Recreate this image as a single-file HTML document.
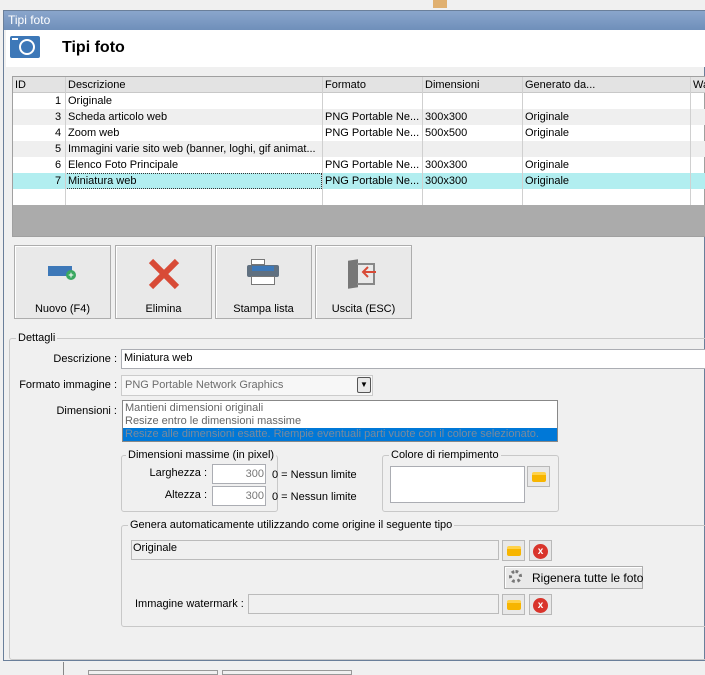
<!DOCTYPE html><html><head><style>
*{box-sizing:border-box}
body{margin:0;width:705px;height:675px;overflow:hidden;background:#f0f0f0;font-family:"Liberation Sans",sans-serif;font-size:11px;color:#000;position:relative}
.a{position:absolute}
.t{position:absolute;white-space:nowrap;line-height:13px}
.in{position:absolute;background:#fff;border:1px solid #abadb3}
.grp{position:absolute;border:1px solid #c8c8c8;border-radius:3px}
.gl{position:absolute;background:#f0f0f0;padding:0 2px;line-height:13px;top:-7px;left:6px;white-space:nowrap}
.btn{position:absolute;border:1px solid #adadad;background:#e9e9e9;box-shadow:inset 1px 1px #fff}
.cell{position:absolute;white-space:nowrap;line-height:16px;overflow:hidden}
.fold{position:absolute;border:1px solid #b8b8b8;background:#e8e8e8}
.fold i{position:absolute;left:4px;top:5px;width:14px;height:10px;background:#f7b500;border-radius:2px;border-top:3px solid #ffd24a}
.xb{position:absolute;border:1px solid #b8b8b8;background:#e8e8e8}
.xb i{position:absolute;left:3px;top:3px;width:15px;height:15px;border-radius:50%;background:#d9342b;color:#fff;font-style:normal;font-size:10px;font-weight:bold;text-align:center;line-height:15px}
</style></head><body>
<div class="a" style="left:433px;top:0;width:14px;height:8px;background:#e0b070"></div>
<div class="a" style="left:3px;top:10px;width:702px;height:651px;border:1px solid #6a7f9a;background:#f0f0f0"></div>
<div class="a" style="left:4px;top:11px;width:701px;height:19px;background:linear-gradient(#8aa6cc,#6f8fba)"></div>
<div class="t" style="left:8px;top:14px;color:#fff;font-size:12px">Tipi foto</div>
<div class="a" style="left:6px;top:30px;width:699px;height:37px;background:#fff"></div>
<div class="a" style="left:10px;top:36px;width:30px;height:22px;background:#3d78b8;border-radius:2px"></div>
<div class="a" style="left:19px;top:39px;width:16px;height:16px;border:2px solid #fff;border-radius:50%"></div>
<div class="a" style="left:12px;top:38px;width:6px;height:2px;background:#fff"></div>
<div class="t" style="left:62px;top:39px;font-size:16px;font-weight:bold;line-height:18px">Tipi foto</div>
<!-- grid -->
<div class="a" style="left:12px;top:76px;width:693px;height:161px;background:#fff;border:1px solid #a0a0a0"></div>
<div class="a" style="left:13px;top:77px;width:692px;height:16px;background:#e3e3e3;border-bottom:1px solid #c8c8c8"></div>
<div class="a" style="left:13px;top:109px;width:692px;height:16px;background:#efefef"></div>
<div class="a" style="left:13px;top:141px;width:692px;height:16px;background:#efefef"></div>
<div class="a" style="left:13px;top:173px;width:692px;height:16px;background:#b2eef0"></div>
<div class="a" style="left:65px;top:173px;width:257px;height:16px;border:1px dotted #333"></div>
<div class="a" style="left:13px;top:205px;width:692px;height:31px;background:#ababab"></div>
<div class="a" style="left:65px;top:77px;width:1px;height:128px;background:#d0d0d0"></div>
<div class="a" style="left:322px;top:77px;width:1px;height:128px;background:#d0d0d0"></div>
<div class="a" style="left:422px;top:77px;width:1px;height:128px;background:#d0d0d0"></div>
<div class="a" style="left:522px;top:77px;width:1px;height:128px;background:#d0d0d0"></div>
<div class="a" style="left:690px;top:77px;width:1px;height:128px;background:#d0d0d0"></div>
<div class="cell" style="left:15px;top:77px">ID</div><div class="cell" style="left:68px;top:77px">Descrizione</div><div class="cell" style="left:325px;top:77px">Formato</div><div class="cell" style="left:425px;top:77px">Dimensioni</div><div class="cell" style="left:525px;top:77px">Generato da...</div><div class="cell" style="left:693px;top:77px">Wa</div>
<div class="cell" style="left:55px;top:93px">1</div><div class="cell" style="left:68px;top:93px">Originale</div>
<div class="cell" style="left:55px;top:109px">3</div><div class="cell" style="left:68px;top:109px">Scheda articolo web</div><div class="cell" style="left:325px;top:109px">PNG Portable Ne...</div><div class="cell" style="left:425px;top:109px">300x300</div><div class="cell" style="left:525px;top:109px">Originale</div>
<div class="cell" style="left:55px;top:125px">4</div><div class="cell" style="left:68px;top:125px">Zoom web</div><div class="cell" style="left:325px;top:125px">PNG Portable Ne...</div><div class="cell" style="left:425px;top:125px">500x500</div><div class="cell" style="left:525px;top:125px">Originale</div>
<div class="cell" style="left:55px;top:141px">5</div><div class="cell" style="left:68px;top:141px;width:252px">Immagini varie sito web (banner, loghi, gif animat...</div>
<div class="cell" style="left:55px;top:157px">6</div><div class="cell" style="left:68px;top:157px">Elenco Foto Principale</div><div class="cell" style="left:325px;top:157px">PNG Portable Ne...</div><div class="cell" style="left:425px;top:157px">300x300</div><div class="cell" style="left:525px;top:157px">Originale</div>
<div class="cell" style="left:55px;top:173px">7</div><div class="cell" style="left:68px;top:173px">Miniatura web</div><div class="cell" style="left:325px;top:173px">PNG Portable Ne...</div><div class="cell" style="left:425px;top:173px">300x300</div><div class="cell" style="left:525px;top:173px">Originale</div>
<!-- buttons -->
<div class="btn" style="left:14px;top:245px;width:97px;height:74px"></div>
<div class="btn" style="left:115px;top:245px;width:97px;height:74px"></div>
<div class="btn" style="left:215px;top:245px;width:97px;height:74px"></div>
<div class="btn" style="left:315px;top:245px;width:97px;height:74px"></div>
<div class="a" style="left:48px;top:266px;width:24px;height:10px;background:#3d78b8"></div>
<div class="a" style="left:66px;top:270px;width:10px;height:10px;border-radius:50%;background:#3aa860;color:#fff;font-size:9px;line-height:10px;text-align:center;font-weight:bold">+</div>
<svg class="a" style="left:148px;top:258px" width="32" height="32"><path d="M3 3L29 29M29 3L3 29" stroke="#d84b37" stroke-width="6"/></svg>
<div class="a" style="left:251px;top:259px;width:14px;height:6px;background:#fff;border:1px solid #777"></div>
<div class="a" style="left:247px;top:265px;width:32px;height:12px;background:#607080;border-radius:2px"></div>
<div class="a" style="left:252px;top:266px;width:22px;height:5px;background:#3d78b8"></div>
<div class="a" style="left:251px;top:276px;width:24px;height:9px;background:#fff;border:1px solid #777"></div>
<div class="a" style="left:348px;top:260px;width:10px;height:28px;background:#777;transform:skewY(-8deg)"></div>
<div class="a" style="left:357px;top:263px;width:18px;height:22px;border:2px solid #888;border-left:none"></div>
<svg class="a" style="left:360px;top:266px" width="18" height="12"><path d="M16 6H3M8 1L3 6L8 11" stroke="#d84b37" stroke-width="2" fill="none"/></svg>
<div class="t" style="left:14px;top:303px;width:97px;text-align:center">Nuovo (F4)</div>
<div class="t" style="left:115px;top:303px;width:97px;text-align:center">Elimina</div>
<div class="t" style="left:215px;top:303px;width:97px;text-align:center">Stampa lista</div>
<div class="t" style="left:315px;top:303px;width:97px;text-align:center">Uscita (ESC)</div>
<!-- dettagli -->
<div class="grp" style="left:9px;top:338px;width:710px;height:322px"><div class="gl">Dettagli</div></div>
<div class="t" style="right:588px;top:353px">Descrizione :</div>
<div class="in" style="left:121px;top:349px;width:590px;height:20px"></div>
<div class="t" style="left:124px;top:352px">Miniatura web</div>
<div class="t" style="right:588px;top:379px">Formato immagine :</div>
<div class="in" style="left:121px;top:375px;width:252px;height:21px;border-color:#ccc;background:#f7f7f7"></div>
<div class="t" style="left:125px;top:379px;color:#6d6d6d">PNG Portable Network Graphics</div>
<div class="a" style="left:357px;top:377px;width:14px;height:16px;border:1px solid #555;border-radius:2px;background:#e8e8e8;font-size:8px;text-align:center;line-height:14px">▼</div>
<div class="t" style="right:588px;top:405px">Dimensioni :</div>
<div class="in" style="left:122px;top:400px;width:436px;height:42px;border-color:#888"></div>
<div class="t" style="left:125px;top:402px;color:#666">Mantieni dimensioni originali</div>
<div class="t" style="left:125px;top:415px;color:#666">Resize entro le dimensioni massime</div>
<div class="a" style="left:123px;top:428px;width:434px;height:13px;background:#0078d7"></div>
<div class="t" style="left:125px;top:428px;color:#7a8a9c">Resize alle dimensioni esatte. Riempie eventuali parti vuote con il colore selezionato.</div>
<div class="grp" style="left:121px;top:455px;width:157px;height:57px"><div class="gl" style="left:4px">Dimensioni massime (in pixel)</div></div>
<div class="t" style="right:498px;top:467px">Larghezza :</div>
<div class="in" style="left:212px;top:464px;width:54px;height:20px"></div>
<div class="t" style="left:212px;top:468px;width:52px;text-align:right;color:#777">300</div>
<div class="t" style="left:272px;top:469px">0 = Nessun limite</div>
<div class="t" style="right:498px;top:489px">Altezza :</div>
<div class="in" style="left:212px;top:486px;width:54px;height:20px"></div>
<div class="t" style="left:212px;top:490px;width:52px;text-align:right;color:#777">300</div>
<div class="t" style="left:272px;top:491px">0 = Nessun limite</div>
<div class="grp" style="left:382px;top:455px;width:177px;height:57px"><div class="gl">Colore di riempimento</div></div>
<div class="in" style="left:390px;top:466px;width:135px;height:37px"></div>
<div class="fold" style="left:527px;top:466px;width:23px;height:21px"><i></i></div>
<div class="grp" style="left:121px;top:525px;width:600px;height:102px"><div class="gl">Genera automaticamente utilizzando come origine il seguente tipo</div></div>
<div class="in" style="left:131px;top:540px;width:368px;height:20px;background:#f0f0f0;border-color:#bbb"></div>
<div class="t" style="left:133px;top:542px">Originale</div>
<div class="fold" style="left:502px;top:540px;width:23px;height:21px"><i></i></div>
<div class="xb" style="left:529px;top:540px;width:23px;height:21px"><i>x</i></div>
<div class="btn" style="left:504px;top:566px;width:139px;height:23px"></div>
<div class="a" style="left:509px;top:570px;width:13px;height:13px;border-radius:50%;border:3px dotted #777"></div>
<div class="t" style="left:532px;top:572px;font-size:12px">Rigenera tutte le foto</div>
<div class="t" style="left:135px;top:598px">Immagine watermark :</div>
<div class="in" style="left:248px;top:594px;width:251px;height:20px;background:#f0f0f0;border-color:#bbb"></div>
<div class="fold" style="left:502px;top:594px;width:23px;height:21px"><i></i></div>
<div class="xb" style="left:529px;top:594px;width:23px;height:21px"><i>x</i></div>
<div class="a" style="left:63px;top:662px;width:1px;height:13px;background:#888"></div>
<div class="a" style="left:88px;top:670px;width:130px;height:5px;border:1px solid #999"></div>
<div class="a" style="left:222px;top:670px;width:130px;height:5px;border:1px solid #999"></div>
</body></html>
